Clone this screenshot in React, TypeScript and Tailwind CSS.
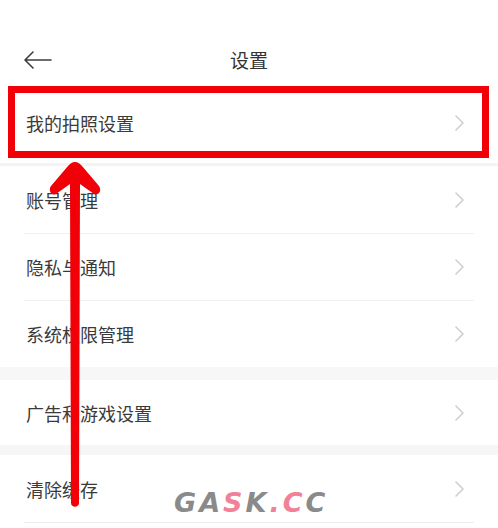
import React from "react";

const Chevron = () => (
  <svg width="12" height="18" viewBox="0 0 12 18" className="shrink-0">
    <path d="M2 2 L9 9 L2 16" fill="none" stroke="#cfcfcf" strokeWidth="1.6" strokeLinecap="round" strokeLinejoin="round" />
  </svg>
);

function Row({ label, h, top = false, bottom = false }: { label: string; h: string; top?: boolean; bottom?: boolean }) {
  return (
    <div className={`${h} px-[24px] bg-white`}>
      <div
        className={`h-full flex items-center justify-between pl-[2px] pr-[8px] ${top ? "border-t border-[#f0f0f0]" : ""} ${bottom ? "border-b border-[#ededed]" : ""}`}
      >
        <span className="text-[18px] leading-none text-[#3a3a3a]">{label}</span>
        <Chevron />
      </div>
    </div>
  );
}

export default function App() {
  return (
    <div
      className="relative w-[498px] h-[528px] bg-white overflow-hidden"
      style={{ fontFamily: '"Noto Sans CJK SC", "Noto Sans", sans-serif' }}
    >
      {/* header */}
      <div className="h-[86px] pt-[36px]">
        <div className="relative h-[50px] flex items-start justify-center">
          <svg width="30" height="20" viewBox="0 0 30 20" className="absolute left-[23px] top-[14px]">
            <path d="M28 10 H2 M10 2 L2 10 L10 18" fill="none" stroke="#3c3c3c" strokeWidth="1.6" strokeLinecap="round" strokeLinejoin="round" />
          </svg>
          <span className="text-[19px] leading-none text-[#333] mt-[14px]">设置</span>
        </div>
      </div>

      <Row label="我的拍照设置" h="h-[73px]" />
      <div className="h-[4px] bg-white" />
      <div className="h-[3px] bg-[#f3f3f3]" />
      <Row label="账号管理" h="h-[67px]" />
      <Row label="隐私与通知" h="h-[67px]" top />
      <Row label="系统权限管理" h="h-[67px]" top />
      <div className="h-[13px] bg-[#f7f7f7]" />
      <Row label="广告和游戏设置" h="h-[65px]" />
      <div className="h-[10px] bg-[#f6f6f6]" />
      <Row label="清除缓存" h="h-[68px]" bottom />

      {/* red highlight box */}
      <div className="absolute left-[8px] top-[86px] w-[481px] h-[72px] border-[7px] border-[#f20008]" />

      {/* red arrow */}
      <svg className="absolute left-0 top-0" width="498" height="528" viewBox="0 0 498 528">
        <path
          d="M75 162 C78 162 80 164 82 166 L99 186 C102 190 99 196 94 194 L80 184 L79 503 C79 508 71 508 71 503 L70 184 L56 194 C51 196 48 190 51 186 L68 166 C70 164 72 162 75 162 Z"
          fill="#f20008"
        />
      </svg>

      {/* watermark */}
      <div
        className="absolute left-[174px] top-[489px] text-[27px] font-bold italic leading-none tracking-[3px]"
        style={{ fontFamily: '"DejaVu Sans", sans-serif' }}
      >
        <span className="text-[#8a8a8a]">GA</span>
        <span className="text-[#f28197]">S</span>
        <span className="text-[#8a8a8a]">K</span>
        <span className="text-[#f28197]">.C</span>
        <span className="text-[#8a8a8a]">C</span>
      </div>
    </div>
  );
}
